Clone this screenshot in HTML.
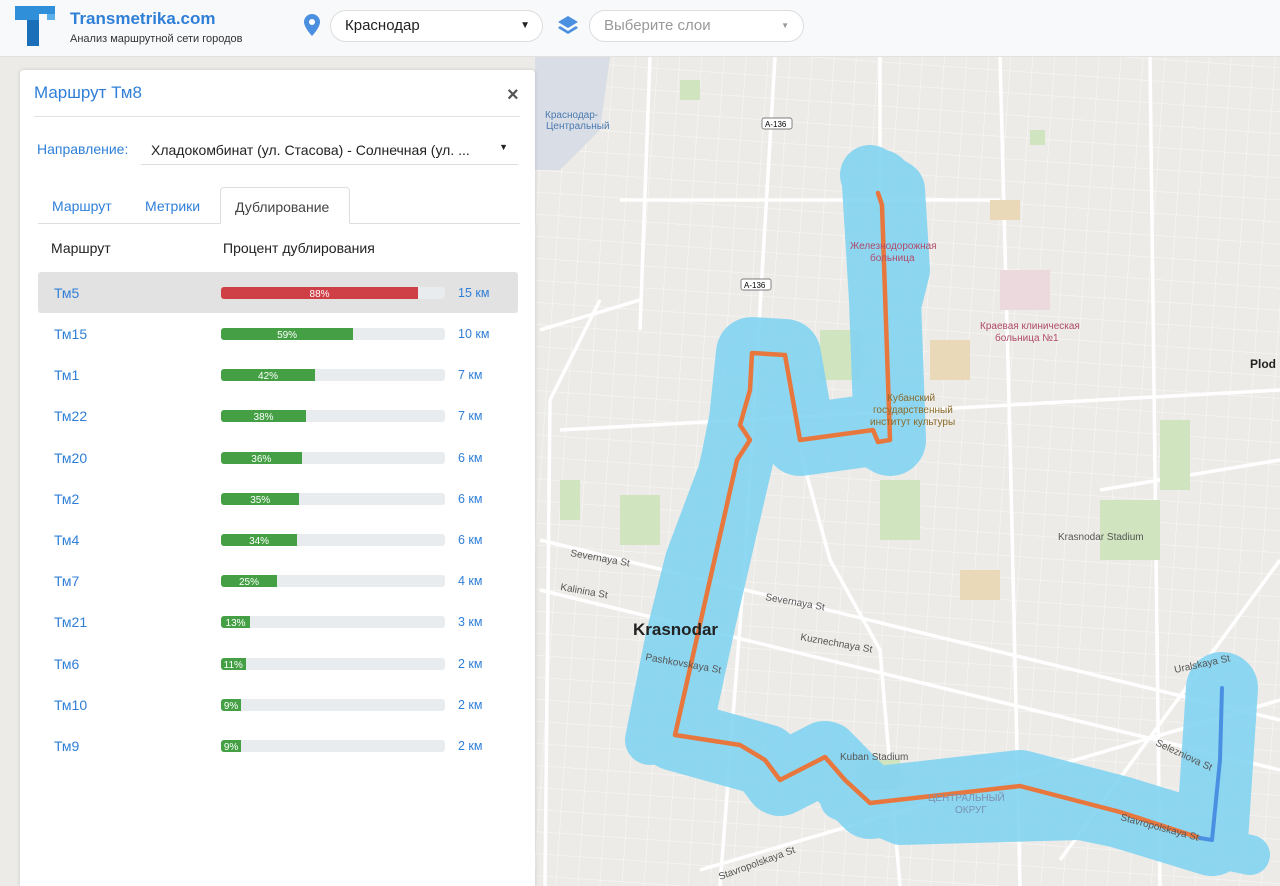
<!DOCTYPE html>
<html><head><meta charset="utf-8"><style>
*{margin:0;padding:0;box-sizing:border-box}
body{width:1280px;height:886px;overflow:hidden;font-family:"Liberation Sans","Noto Sans CJK SC",sans-serif;background:#ecebe7;position:relative}
.hdr{position:absolute;left:0;top:0;width:1280px;height:57px;background:#f8f9fa;border-bottom:1px solid #e2e2e2}
.sel{position:absolute;top:10px;height:32px;border:1px solid #ddd;border-radius:16px;background:#fff;font-size:15px;line-height:30px;padding-left:14px}
.panel{position:absolute;left:20px;top:70px;width:515px;height:816px;background:#fff;border-radius:4px 4px 0 0;box-shadow:0 0 4px rgba(0,0,0,.15)}
.row{position:absolute;left:18px;width:480px;height:41px}
.row .n{position:absolute;left:16px;top:13px;color:#2f7fd8;font-size:14px}
.row .bar{position:absolute;left:183px;top:15px;width:224px;height:12px;background:#e9ecef;border-radius:3px;overflow:hidden}
.row .bar div{height:12px;background:#45a045;color:#fff;font-size:10px;text-align:center;line-height:13px;padding-top:1px}
.row .km{position:absolute;left:420px;top:14px;color:#2f7fd8;font-size:12.5px}
</style></head><body>
<svg style="position:absolute;left:0;top:57px" width="1280" height="829">
<defs><pattern id="g" width="22" height="22" patternUnits="userSpaceOnUse" patternTransform="rotate(4)"><path d="M0 0H22M0 0V22" stroke="#fff" stroke-width="1" opacity=".75"/></pattern></defs>
<g transform="translate(0,-57)">
<rect x="0" y="57" width="1280" height="829" fill="#ecebe7"/>
<rect x="535" y="57" width="745" height="829" fill="url(#g)"/>
<path d="M535 57 L610 57 L600 130 L560 170 L535 170Z" fill="#d9dde6"/>
<g stroke="#fff" stroke-width="3.5" fill="none">
<path d="M775 57 L745 560 L720 886"/><path d="M880 57 L880 200"/><path d="M540 540 L1280 720"/><path d="M540 590 L1280 770"/>
<path d="M700 870 L1280 700"/><path d="M1060 860 L1280 560"/><path d="M620 200 L1000 200"/><path d="M1000 57 L1010 440 L1020 886"/>
<path d="M600 300 L550 400 L545 886"/><path d="M560 430 L1280 390"/><path d="M1150 57 L1160 886"/><path d="M650 57 L640 330"/>
<path d="M800 450 L830 560 L880 650 L900 886"/><path d="M540 330 L640 300"/><path d="M1100 490 L1280 460"/>
</g>
<g fill="#cfe4bf"><rect x="620" y="495" width="40" height="50"/><rect x="1100" y="500" width="60" height="60"/><rect x="820" y="330" width="40" height="50"/><rect x="880" y="480" width="40" height="60"/><rect x="1160" y="420" width="30" height="70"/><rect x="560" y="480" width="20" height="40"/><rect x="860" y="760" width="40" height="30"/><rect x="1030" y="130" width="15" height="15"/><rect x="680" y="80" width="20" height="20"/></g>
<g fill="#ead9b8"><rect x="990" y="200" width="30" height="20"/><rect x="960" y="570" width="40" height="30"/><rect x="930" y="340" width="40" height="40"/></g>
<rect x="1000" y="270" width="50" height="40" fill="#ecd9de"/>
<g fill="none" stroke-linejoin="round" stroke-linecap="round" stroke="#83d4f2" opacity=".9">
<polyline points="878,185 885,300 890,440 873,430 800,440 785,355 752,353 745,420 737,460 700,620 675,735 765,760 780,780 825,757 870,803 1020,786 1120,812 1212,840 1222,688" stroke-width="72"/>
<polyline points="870,175 895,190 900,270 885,330" stroke-width="60"/>
<polyline points="720,480 690,560 670,640 650,740" stroke-width="50"/>
<polyline points="840,800 900,825 1080,820 1250,855" stroke-width="40"/>
</g>
<g fill="none" stroke-linejoin="round" stroke-linecap="round">
<polyline points="878,193 882,205 890,440 878,442 873,430 800,440 785,355 752,353 750,390 740,425 750,440 737,460 675,735 740,745 765,760 780,780 825,757 845,780 870,803 1020,786 1120,812 1200,838" stroke="#e8773e" stroke-width="4.5"/>
<polyline points="1200,838 1212,840 1220,760 1222,688" stroke="#4a90e2" stroke-width="4"/>
</g>
<text x="633" y="635" font-size="17" font-weight="bold" fill="#222">Krasnodar</text>
<text x="1250" y="368" font-size="12" font-weight="bold" fill="#222">Plod</text>
<text x="850" y="249" font-size="10" fill="#b04a6a">Железнодорожная</text><text x="870" y="261" font-size="10" fill="#b04a6a">больница</text>
<text x="980" y="329" font-size="10" fill="#b04a6a">Краевая клиническая</text><text x="995" y="341" font-size="10" fill="#b04a6a">больница №1</text>
<text x="887" y="401" font-size="10" fill="#8a6a2a">Кубанский</text><text x="873" y="413" font-size="10" fill="#8a6a2a">государственный</text><text x="870" y="425" font-size="10" fill="#8a6a2a">институт культуры</text>
<text x="1058" y="540" font-size="10" fill="#555">Krasnodar Stadium</text>
<text x="840" y="760" font-size="10" fill="#555">Kuban Stadium</text>
<text x="545" y="118" font-size="10" fill="#4a7ab0">Краснодар-</text><text x="546" y="129" font-size="10" fill="#4a7ab0">Центральный</text>
<text x="928" y="801" font-size="10" fill="#7a90b0">ЦЕНТРАЛЬНЫЙ</text><text x="955" y="813" font-size="10" fill="#7a90b0">ОКРУГ</text>
<text x="570" y="556" font-size="10" fill="#555" transform="rotate(10 570 556)">Severnaya St</text>
<text x="560" y="590" font-size="10" fill="#555" transform="rotate(10 560 590)">Kalinina St</text>
<text x="765" y="600" font-size="10" fill="#555" transform="rotate(10 765 600)">Severnaya St</text>
<text x="800" y="640" font-size="10" fill="#555" transform="rotate(10 800 640)">Kuznechnaya St</text>
<text x="645" y="660" font-size="10" fill="#555" transform="rotate(10 645 660)">Pashkovskaya St</text>
<text x="1175" y="673" font-size="10" fill="#555" transform="rotate(-12 1175 673)">Uralskaya St</text>
<text x="1155" y="745" font-size="10" fill="#555" transform="rotate(25 1155 745)">Selezniova St</text>
<text x="1120" y="820" font-size="10" fill="#555" transform="rotate(15 1120 820)">Stavropolskaya St</text>
<text x="720" y="880" font-size="10" fill="#555" transform="rotate(-20 720 880)">Stavropolskaya St</text>
<rect x="762" y="118" width="30" height="11" rx="2" fill="#fff" stroke="#555" stroke-width=".7"/><text x="765" y="127" font-size="8">A-136</text>
<rect x="741" y="279" width="30" height="11" rx="2" fill="#fff" stroke="#555" stroke-width=".7"/><text x="744" y="288" font-size="8">A-136</text>
</g></svg>

<div class="hdr">
<svg style="position:absolute;left:13px;top:4px" width="44" height="44" viewBox="0 0 44 44"><path d="M2 2 H42 V16 H34 V10 H26 V42 H14 V16 H2Z" fill="#2f8fd8"/><path d="M14 16 H26 V42 H14Z" fill="#1b6fb8"/><path d="M34 10 H42 V16 H34Z" fill="#5bb0ea"/></svg>
<div style="position:absolute;left:70px;top:9px;color:#2f7fd8;font-size:17px;font-weight:bold">Transmetrika.com</div>
<div style="position:absolute;left:70px;top:33px;color:#333;font-size:11px">Анализ маршрутной сети городов</div>
<svg style="position:absolute;left:304px;top:14px" width="16" height="22" viewBox="0 0 16 22"><path d="M8 0C3.6 0 0 3.5 0 8c0 5.5 8 14 8 14s8-8.5 8-14C16 3.5 12.4 0 8 0z" fill="#4a8fe0"/><circle cx="8" cy="8" r="3" fill="#fff"/></svg>
<div class="sel" style="left:330px;width:213px;color:#222">Краснодар<span style="position:absolute;right:12px;font-size:10px">▼</span></div>
<svg style="position:absolute;left:557px;top:15px" width="22" height="22" viewBox="0 0 22 22"><path d="M11 1 L21 7 L11 13 L1 7Z" fill="#4a8fe0"/><path d="M3 11 L11 16 L19 11 L21 13 L11 19 L1 13Z" fill="#4a8fe0"/></svg>
<div class="sel" style="left:589px;width:215px;color:#999">Выберите слои<span style="position:absolute;right:14px;font-size:8px">▼</span></div>
</div>

<div class="panel">
<div style="position:absolute;left:14px;top:13px;color:#2f7fd8;font-size:17px">Маршрут Тм8</div>
<div style="position:absolute;left:487px;top:14px;color:#555;font-size:20px;font-weight:bold">×</div>
<div style="position:absolute;left:14px;top:46px;width:486px;height:1px;background:#e3e3e3"></div>
<div style="position:absolute;left:17px;top:71px;color:#2f7fd8;font-size:14px">Направление:</div>
<div style="position:absolute;left:121px;top:64px;width:377px;height:31px;border-bottom:1px solid #ddd;font-size:14px;color:#222;padding:8px 10px">Хладокомбинат (ул. Стасова) - Солнечная (ул. ...<span style="position:absolute;right:10px;font-size:9px;top:8px">▼</span></div>
<div style="position:absolute;left:18px;top:153px;width:482px;height:1px;background:#ddd"></div>
<div style="position:absolute;left:32px;top:128px;color:#2f7fd8;font-size:14px">Маршрут</div>
<div style="position:absolute;left:125px;top:128px;color:#2f7fd8;font-size:14px">Метрики</div>
<div style="position:absolute;left:200px;top:117px;width:130px;height:37px;border:1px solid #ddd;border-bottom:1px solid #fff;border-radius:4px 4px 0 0;background:#fff;font-size:14px;color:#444;padding:11px 0 0 14px">Дублирование</div>
<div style="position:absolute;left:31px;top:170px;font-size:14px;color:#222">Маршрут</div>
<div style="position:absolute;left:203px;top:170px;font-size:14px;color:#222">Процент дублирования</div>

<div class="row" style="top:202px;background:#e2e2e2;border-radius:3px"><span class="n">Тм5</span><div class="bar"><div style="width:88%;background:#cf3f46">88%</div></div><span class="km">15 км</span></div>
<div class="row" style="top:243px"><span class="n">Тм15</span><div class="bar"><div style="width:59%">59%</div></div><span class="km">10 км</span></div>
<div class="row" style="top:284px"><span class="n">Тм1</span><div class="bar"><div style="width:42%">42%</div></div><span class="km">7 км</span></div>
<div class="row" style="top:325px"><span class="n">Тм22</span><div class="bar"><div style="width:38%">38%</div></div><span class="km">7 км</span></div>
<div class="row" style="top:367px"><span class="n">Тм20</span><div class="bar"><div style="width:36%">36%</div></div><span class="km">6 км</span></div>
<div class="row" style="top:408px"><span class="n">Тм2</span><div class="bar"><div style="width:35%">35%</div></div><span class="km">6 км</span></div>
<div class="row" style="top:449px"><span class="n">Тм4</span><div class="bar"><div style="width:34%">34%</div></div><span class="km">6 км</span></div>
<div class="row" style="top:490px"><span class="n">Тм7</span><div class="bar"><div style="width:25%">25%</div></div><span class="km">4 км</span></div>
<div class="row" style="top:531px"><span class="n">Тм21</span><div class="bar"><div style="width:13%">13%</div></div><span class="km">3 км</span></div>
<div class="row" style="top:573px"><span class="n">Тм6</span><div class="bar"><div style="width:11%">11%</div></div><span class="km">2 км</span></div>
<div class="row" style="top:614px"><span class="n">Тм10</span><div class="bar"><div style="width:9%">9%</div></div><span class="km">2 км</span></div>
<div class="row" style="top:655px"><span class="n">Тм9</span><div class="bar"><div style="width:9%">9%</div></div><span class="km">2 км</span></div>
</div>
</body></html>
